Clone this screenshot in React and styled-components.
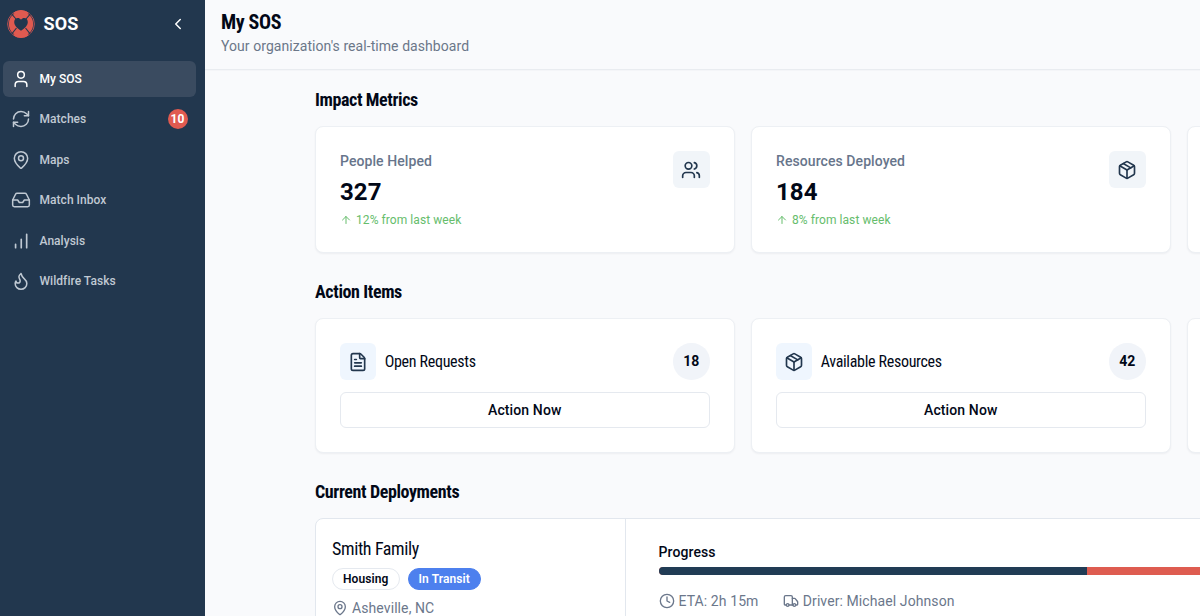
import React from 'react';
import styled, { createGlobalStyle } from 'styled-components';
import {
  User, RefreshCw, MapPin, Inbox, Flame, ChevronLeft, Users, Package,
  FileText, ArrowUp, Clock, Truck,
} from 'lucide-react';

const GlobalStyle = createGlobalStyle`
  * {
    box-sizing: border-box;
  }

  body {
    margin: 0;
    overflow: hidden;
    background: #f9fafc;
    color: #020817;
    font-family: Roboto, sans-serif;
    font-size: 14px;
  }

  h1, h2, h3, p {
    margin: 0;
  }

  svg {
    display: block;
    flex: none;
  }
`;

const Layout = styled.div`
  display: flex;
  width: 1200px;
  height: 616px;
  overflow: hidden;
`;

const Sidebar = styled.aside`
  flex: none;
  width: 205px;
  background: #22374e;
  color: #fff;
`;

const Brand = styled.div`
  display: flex;
  align-items: center;
  height: 47px;
  padding: 0 18px 0 7px;

  strong {
    flex: 1;
    margin-left: 8.5px;
    font-size: 18px;
    font-weight: 700;
    letter-spacing: 0.1px;
  }
`;

const Menu = styled.nav`
  display: flex;
  flex-direction: column;
  gap: 4px;
  padding: 13.8px 9px 0 3px;
`;

const MenuItem = styled.a`
  display: flex;
  align-items: center;
  gap: 8.5px;
  height: 36.4px;
  padding: 0 8.5px 0 8px;
  border-radius: 6px;
  background: ${(p) => (p.$active ? '#3a4b60' : 'transparent')};
  color: ${(p) => (p.$active ? '#fff' : '#c0c9d3')};
  font-size: 12px;
  font-weight: 500;
  letter-spacing: 0.04px;

  span {
    flex: 1;
  }
`;

const Count = styled.b`
  width: 20px;
  height: 20px;
  border-radius: 50%;
  background: #e05a50;
  color: #fff;
  font-size: 12px;
  line-height: 20px;
  text-align: center;
`;

const Main = styled.main`
  flex: 1;
  min-width: 0;
  overflow: hidden;
`;

const Header = styled.header`
  height: 70px;
  padding: 10px 16px 0;
  border-bottom: 1px solid #e9ecf0;
  box-shadow: 0 1px 1px rgba(15, 23, 42, 0.02);

  p {
    color: #6b7789;
    font-size: 14px;
    line-height: 20px;
    letter-spacing: 0.06px;
    margin-top: 2px;
  }
`;

const Title = styled.h1`
  font-family: 'Roboto Condensed', Roboto, sans-serif;
  font-stretch: 75%;
  font-size: 20px;
  font-weight: 700;
  line-height: 24px;
  letter-spacing: -0.38px;
`;

const Content = styled.div`
  width: 1402px;
  padding: 0 0 0 110px;
`;

const Section = styled.section`
  padding-top: ${(p) => p.$top}px;

  h2 {
    margin-bottom: 14px;
    font-family: 'Roboto Condensed', Roboto, sans-serif;
    font-stretch: 75%;
    font-size: 18px;
    font-weight: 700;
    line-height: 24px;
    letter-spacing: -0.39px;
  }
`;

const Cards = styled.div`
  display: flex;
  gap: 16px;
`;

const Card = styled.div`
  flex: none;
  width: 420px;
  height: ${(p) => p.$height}px;
  padding: 24.4px 24.5px 24px 24px;
  border: 1px solid #edf0f4;
  border-radius: 8px;
  background: #fff;
  box-shadow: 0 1px 2px rgba(15, 23, 42, 0.05);
`;

const Metric = styled.div`
  display: flex;
  justify-content: space-between;
`;

const MetricLabel = styled.p`
  color: #67758b;
  font-size: 14px;
  font-weight: 500;
  line-height: 20px;
  letter-spacing: 0.08px;
`;

const MetricValue = styled.p`
  margin-top: 4.4px;
  font-size: 24px;
  font-weight: 700;
  line-height: 32px;
  letter-spacing: 0.1px;
`;

const Trend = styled.p`
  display: flex;
  align-items: center;
  gap: 4px;
  margin-top: 4px;
  color: #66bd6c;
  font-size: 12px;
  line-height: 17px;
  letter-spacing: 0.07px;
`;

const IconBox = styled.div`
  display: flex;
  align-items: center;
  justify-content: center;
  width: 36.4px;
  height: 36.4px;
  border-radius: 6px;
  background: ${(p) => (p.$blue ? '#eff6fe' : '#f1f5f9')};
  color: #22374e;
`;

const ActionHead = styled.div`
  display: flex;
  align-items: center;
  height: 36.4px;

  h3 {
    flex: 1;
    margin-left: 8.3px;
    font-family: 'Roboto Condensed', Roboto, sans-serif;
    font-stretch: 75%;
    font-size: 16px;
    font-weight: 400;
    letter-spacing: -0.31px;
  }
`;

const Amount = styled.b`
  width: 36.4px;
  height: 36.4px;
  border-radius: 50%;
  background: #f1f4f9;
  font-size: 14px;
  line-height: 36.4px;
  text-align: center;
`;

const ActionButton = styled.button`
  display: block;
  width: 100%;
  height: 36.4px;
  margin-top: 11.8px;
  padding: 0;
  border: 1px solid #e5e9ef;
  border-radius: 6px;
  background: #fff;
  color: #020817;
  font-family: inherit;
  font-size: 14px;
  font-weight: 500;
  letter-spacing: 0.12px;
`;

const Deployment = styled.div`
  display: flex;
  height: 140px;
  border: 1px solid #e2e7ee;
  border-radius: 8px;
  background: #fff;
`;

const Family = styled.div`
  flex: none;
  width: 310px;
  padding: 17px 16px;
  border-right: 1px solid #e2e7ee;

  h3 {
    font-family: 'Roboto Condensed', Roboto, sans-serif;
    font-stretch: 75%;
    font-size: 18px;
    font-weight: 400;
    line-height: 26px;
    letter-spacing: -0.38px;
  }
`;

const Tags = styled.div`
  display: flex;
  gap: 8px;
  margin: 6px 0 8px;
`;

const Tag = styled.span`
  height: 22px;
  padding: 0 10px;
  border: 1px solid ${(p) => (p.$solid ? '#4d80ee' : '#e5e9ef')};
  border-radius: 11px;
  background: ${(p) => (p.$solid ? '#4d80ee' : '#fff')};
  color: ${(p) => (p.$solid ? '#fff' : '#020817')};
  font-size: 12px;
  font-weight: 600;
  line-height: 20px;
  letter-spacing: 0.1px;
`;

const Detail = styled.div`
  display: flex;
  align-items: center;
  gap: 4px;
  color: #6b778b;
  font-size: 14px;
  line-height: 20px;
  letter-spacing: 0.09px;
`;

const Status = styled.div`
  flex: 1;
  padding: 23px 32px 0 32.5px;

  h3 {
    font-size: 14px;
    font-weight: 500;
    line-height: 20px;
    letter-spacing: 0.1px;
  }
`;

const Track = styled.div`
  height: 8px;
  margin: 4.5px 0 16.5px;
  border-radius: 4px;
  background: #de5c50;
  overflow: hidden;
`;

const Bar = styled.div`
  height: 100%;
  background: #213c55;
`;

const Details = styled.div`
  display: flex;
  gap: 24.3px;
`;

const Logo = () => (
  <svg width="28" height="30" viewBox="0 0 28 30">
    <circle cx="14" cy="15" r="13.4" fill="none" stroke="#c65354" strokeWidth="0.9" />
    <circle cx="14" cy="15" r="12.2" fill="#e05a50" />
    <path d="M6.5 3.5Q14-1.500 21.500 3.500L18 9h-8zM6.500 26.500Q14 31.500 21.500 26.500L18 21h-8z" fill="#e05a50" />
    <path d="M4.800 5.200 9 10M23.200 5.200 19 10M4.800 24.800 9.500 19M23.200 24.800 18.500 19" stroke="#22374e" strokeWidth="1.1" />
    <path d="M14 21.800C10 19 7.200 16.300 7.200 12.900c0-4.200 4.800-5 6.800-2.200 2-2.800 6.800-2 6.800 2.200 0 3.400-2.800 6.100-6.800 8.900z" fill="#22374e" />
  </svg>
);

const BarChart = ({ size }) => (
  <svg width={size} height={size} viewBox="0 0 24 24" fill="none" stroke="currentColor" strokeWidth="2" strokeLinecap="round">
    <path d="M12.300 20V10M18.800 20V4M5.500 20v-4" />
  </svg>
);

const menu = [
  { label: 'My SOS', icon: User, active: true },
  { label: 'Matches', icon: RefreshCw, count: 10 },
  { label: 'Maps', icon: MapPin },
  { label: 'Match Inbox', icon: Inbox },
  { label: 'Analysis', icon: BarChart },
  { label: 'Wildfire Tasks', icon: Flame },
];

const metrics = [
  { label: 'People Helped', value: 327, trend: '12% from last week', icon: Users },
  { label: 'Resources Deployed', value: 184, trend: '8% from last week', icon: Package },
];

const actions = [
  { label: 'Open Requests', amount: 18, icon: FileText },
  { label: 'Available Resources', amount: 42, icon: Package },
];

const App = () => {
  const progress = 46.8;

  return (
    <Layout>
      <GlobalStyle />
      <Sidebar>
        <Brand>
          <Logo />
          <strong>SOS</strong>
          <ChevronLeft size={18} />
        </Brand>
        <Menu>
          {menu.map(({ label, icon: Icon, active, count }) => (
            <MenuItem key={label} $active={active}>
              <Icon size={20} strokeWidth={1.8} />
              <span>{label}</span>
              {count && <Count>{count}</Count>}
            </MenuItem>
          ))}
        </Menu>
      </Sidebar>
      <Main>
        <Header>
          <Title>My SOS</Title>
          <p>Your organization's real-time dashboard</p>
        </Header>
        <Content>
          <Section $top={18}>
            <h2>Impact Metrics</h2>
            <Cards>
              {metrics.map(({ label, value, trend, icon: Icon }) => (
                <Card key={label} $height={127}>
                  <Metric>
                    <div>
                      <MetricLabel>{label}</MetricLabel>
                      <MetricValue>{value}</MetricValue>
                      <Trend><ArrowUp size={12} />{trend}</Trend>
                    </div>
                    <IconBox><Icon size={20} /></IconBox>
                  </Metric>
                </Card>
              ))}
              <Card $height={127} />
            </Cards>
          </Section>
          <Section $top={27}>
            <h2>Action Items</h2>
            <Cards>
              {actions.map(({ label, amount, icon: Icon }) => (
                <Card key={label} $height={135}>
                  <ActionHead>
                    <IconBox $blue><Icon size={20} /></IconBox>
                    <h3>{label}</h3>
                    <Amount>{amount}</Amount>
                  </ActionHead>
                  <ActionButton>Action Now</ActionButton>
                </Card>
              ))}
              <Card $height={135} />
            </Cards>
          </Section>
          <Section $top={27}>
            <h2>Current Deployments</h2>
            <Deployment>
              <Family>
                <h3>Smith Family</h3>
                <Tags>
                  <Tag>Housing</Tag>
                  <Tag $solid>In Transit</Tag>
                </Tags>
                <Detail><MapPin size={16} />Asheville, NC</Detail>
              </Family>
              <Status>
                <h3>Progress</h3>
                <Track>
                  <Bar style={{ width: `${progress}%` }} />
                </Track>
                <Details>
                  <Detail><Clock size={16} />ETA: 2h 15m</Detail>
                  <Detail><Truck size={16} />Driver: Michael Johnson</Detail>
                </Details>
              </Status>
            </Deployment>
          </Section>
        </Content>
      </Main>
    </Layout>
  );
};

export default App;
